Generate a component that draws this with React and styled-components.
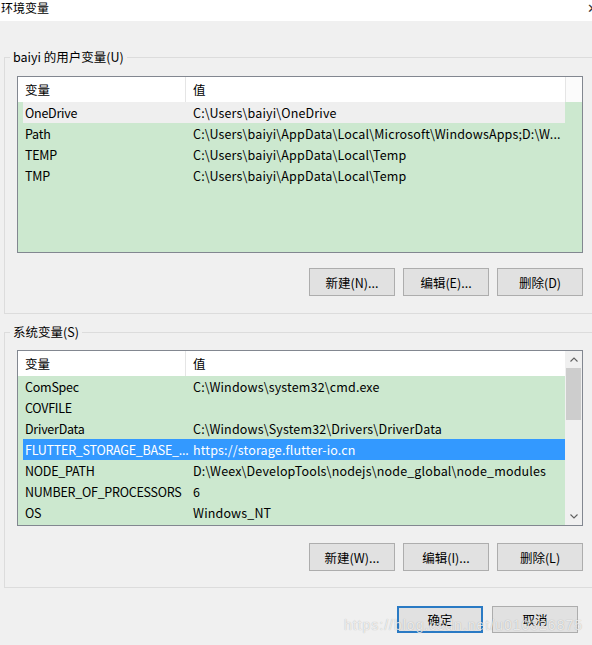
import React from "react";
import styled, { createGlobalStyle } from "styled-components";

const Global = createGlobalStyle`
  html, body { margin: 0; padding: 0; background: #f0f0f0; }
  body { font-family: "Noto Sans CJK SC", "Noto Sans", sans-serif; }
`;

const Window = styled.div`
  position: relative;
  width: 592px;
  height: 645px;
  overflow: hidden;
  background: #f0f0f0;
  font-size: 12px;
  color: #000;
`;

const TitleBar = styled.div`
  height: 21px;
  background: #fff;
  display: flex;
  align-items: flex-start;
  justify-content: space-between;
  padding-left: 1px;
  line-height: 16px;
`;

const TitleText = styled.span`
  font-size: 12px;
`;

const CloseGlyph = styled.span`
  font-size: 13px;
  color: #333;
  margin-right: -6px;
  line-height: 16px;
`;

const Body = styled.div`
  padding-top: 28px;
  display: flex;
  flex-direction: column;
`;

const Group = styled.fieldset`
  margin: ${(p) => p.$mt || 0}px -4px 0 4px;
  padding: ${(p) => p.$pt}px 12px ${(p) => p.$pb}px 12px;
  border: 1px solid #dcdcdc;
  min-width: 0;
`;

const Legend = styled.legend`
  font-size: 12.5px;
  line-height: 16px;
  padding: 0 3px;
  margin-left: -7px;
`;

const ListBox = styled.div`
  height: ${(p) => p.$h}px;
  border: 1px solid #828790;
  display: grid;
  grid-template-columns: ${(p) => (p.$scroll ? "1fr 17px" : "1fr")};
  background: #cce8cf;
`;

const ListMain = styled.div`
  display: flex;
  flex-direction: column;
  min-width: 0;
`;

const Header = styled.div`
  height: 25px;
  background: #fff;
  display: grid;
  grid-template-columns: 168px 379px ${(p) => (p.$filler ? "1fr" : "")};
  line-height: 25px;
  font-size: 12.5px;
`;

const HeadCell = styled.div`
  padding-left: 7px;
  border-right: ${(p) => (p.$divider ? "1px solid #e5e5e5" : "none")};
  border-left: ${(p) => (p.$filler ? "1px solid #e5e5e5" : "none")};
  background: ${(p) => (p.$filler ? "#fbfbfb" : "#fff")};
  box-sizing: border-box;
`;

const Row = styled.div`
  margin-left: 5px;
  width: 542px;
  height: 21px;
  line-height: 21px;
  display: grid;
  grid-template-columns: 163px 379px;
  font-size: 12.5px;
  background: ${(p) =>
    p.$state === "selected" ? "#3399ff" : p.$state === "hover" ? "#efefef" : "transparent"};
  color: ${(p) => (p.$state === "selected" ? "#fff" : "#000")};
`;

const Cell = styled.div`
  padding-left: ${(p) => (p.$first ? 2 : 7)}px;
  letter-spacing: ${(p) => (p.$first ? -0.25 : 0.15)}px;
  white-space: nowrap;
  overflow: ${(p) => (p.$first ? "visible" : "hidden")};
`;

const ScrollBar = styled.div`
  background: #f0f0f0;
  display: flex;
  flex-direction: column;
`;

const ArrowBtn = styled.div`
  height: 17px;
  display: flex;
  align-items: center;
  justify-content: center;
`;

const Track = styled.div`
  flex: 1;
  display: flex;
  flex-direction: column;
`;

const Thumb = styled.div`
  margin: 0 1px;
  height: 52px;
  background: #cdcdcd;
`;

const ButtonRow = styled.div`
  margin-top: ${(p) => p.$mt}px;
  display: flex;
  justify-content: flex-end;
  gap: ${(p) => p.$gap || 8}px;
  padding-right: ${(p) => p.$pr || 0}px;
`;

const Button = styled.button`
  width: 86px;
  height: ${(p) => p.$h || 28}px;
  box-sizing: border-box;
  background: #e1e1e1;
  border: ${(p) => (p.$default ? "2px solid #2a7ac4" : "1px solid #adadad")};
  font-family: inherit;
  font-size: 12.5px;
  color: #000;
  padding: 0;
`;

const Watermark = styled.div`
  position: absolute;
  right: 9px;
  top: 617px;
  font-family: "Liberation Sans", Arial, sans-serif;
  font-size: 14px;
  letter-spacing: 1px;
  color: rgba(255, 255, 255, 0.75);
  text-shadow: 0 0 1px rgba(0, 0, 0, 0.3);
  pointer-events: none;
`;

const Chevron = ({ up }) => (
  <svg width="8" height="5" viewBox="0 0 8 5">
    <path
      d={up ? "M0.5 4.5 L4 1 L7.5 4.5" : "M0.5 0.5 L4 4 L7.5 0.5"}
      fill="none"
      stroke="#606060"
      strokeWidth="1.1"
    />
  </svg>
);

const userVars = [
  ["OneDrive", "C:\\Users\\baiyi\\OneDrive", "hover"],
  ["Path", "C:\\Users\\baiyi\\AppData\\Local\\Microsoft\\WindowsApps;D:\\W..."],
  ["TEMP", "C:\\Users\\baiyi\\AppData\\Local\\Temp"],
  ["TMP", "C:\\Users\\baiyi\\AppData\\Local\\Temp"],
];

const sysVars = [
  ["ComSpec", "C:\\Windows\\system32\\cmd.exe"],
  ["COVFILE", ""],
  ["DriverData", "C:\\Windows\\System32\\Drivers\\DriverData"],
  ["FLUTTER_STORAGE_BASE_...", "https://storage.flutter-io.cn", "selected"],
  ["NODE_PATH", "D:\\Weex\\DevelopTools\\nodejs\\node_global\\node_modules"],
  ["NUMBER_OF_PROCESSORS", "6"],
  ["OS", "Windows_NT"],
];

const Rows = ({ items }) =>
  items.map(([k, v, s]) => (
    <Row key={k} $state={s}>
      <Cell $first>{k}</Cell>
      <Cell>{v}</Cell>
    </Row>
  ));

export default function App() {
  return (
    <>
      <Global />
      <Window>
        <TitleBar>
          <TitleText>环境变量</TitleText>
          <CloseGlyph>✕</CloseGlyph>
        </TitleBar>
        <Body>
          <Group $pt={11} $pb={17}>
            <Legend>baiyi 的用户变量(U)</Legend>
            <ListBox $h={175}>
              <ListMain>
                <Header $filler>
                  <HeadCell $divider>变量</HeadCell>
                  <HeadCell>值</HeadCell>
                  <HeadCell $filler />
                </Header>
                <Rows items={userVars} />
              </ListMain>
            </ListBox>
            <ButtonRow $mt={15}>
              <Button>新建(N)...</Button>
              <Button>编辑(E)...</Button>
              <Button>删除(D)</Button>
            </ButtonRow>
          </Group>
          <Group $mt={10} $pt={10} $pb={16}>
            <Legend>系统变量(S)</Legend>
            <ListBox $h={174} $scroll>
              <ListMain>
                <Header>
                  <HeadCell $divider>变量</HeadCell>
                  <HeadCell>值</HeadCell>
                </Header>
                <Rows items={sysVars} />
              </ListMain>
              <ScrollBar>
                <ArrowBtn>
                  <Chevron up />
                </ArrowBtn>
                <Track>
                  <Thumb />
                </Track>
                <ArrowBtn>
                  <Chevron />
                </ArrowBtn>
              </ScrollBar>
            </ListBox>
            <ButtonRow $mt={17}>
              <Button>新建(W)...</Button>
              <Button>编辑(I)...</Button>
              <Button>删除(L)</Button>
            </ButtonRow>
          </Group>
          <ButtonRow $mt={18} $gap={9} $pr={14}>
            <Button $h={27} $default>
              确定
            </Button>
            <Button $h={27}>取消</Button>
          </ButtonRow>
        </Body>
        <Watermark>https://blog.csdn.net/u010326875</Watermark>
      </Window>
    </>
  );
}
